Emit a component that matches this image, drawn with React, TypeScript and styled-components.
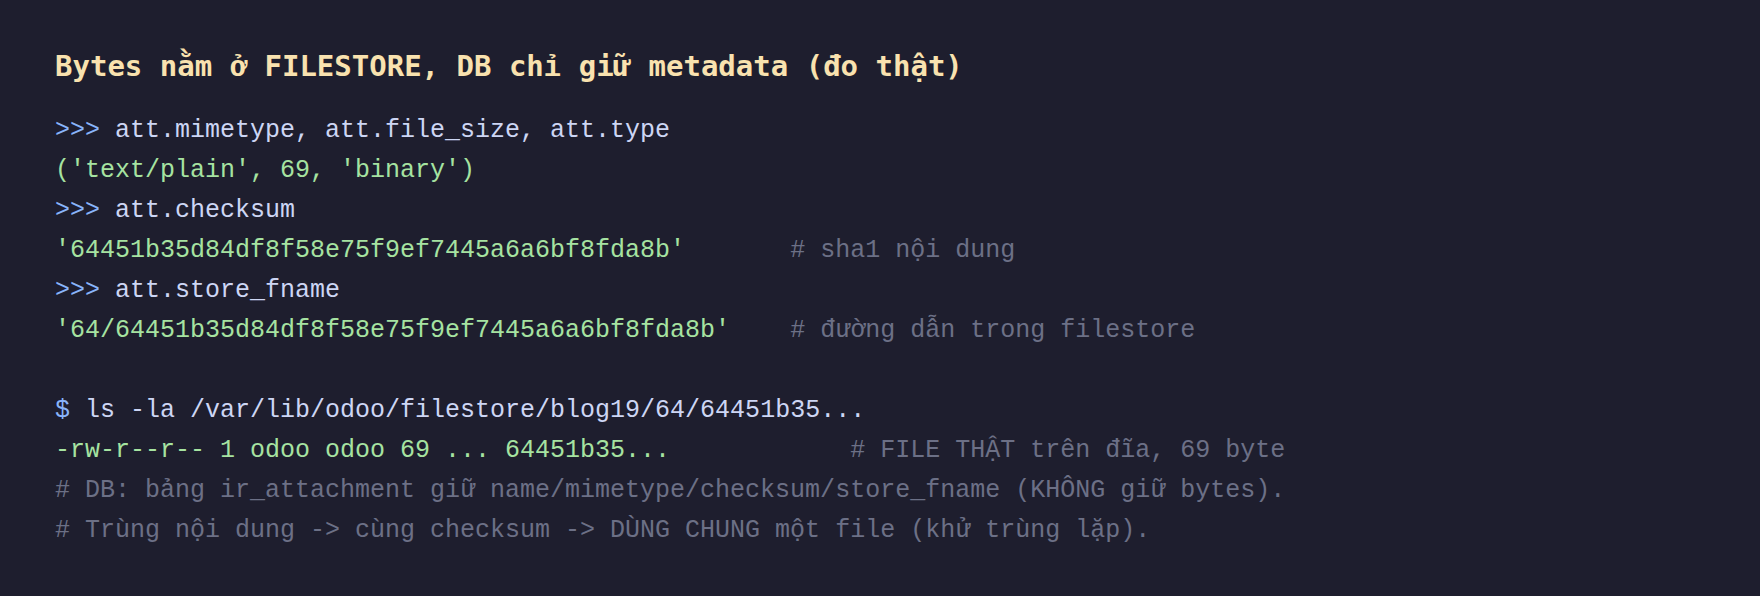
import React from "react";
import styled, { createGlobalStyle } from "styled-components";

const Global = createGlobalStyle`
  html, body {
    margin: 0;
    padding: 0;
    background: #1e1e2e;
  }
  #root {
    min-height: 596px;
  }
`;

const Page = styled.main`
  box-sizing: border-box;
  min-height: 596px;
  background: #1e1e2e;
  padding: 46px 55px 45px 55px;
  display: flex;
  flex-direction: column;
`;

const Title = styled.h3`
  margin: 0 0 25px 0;
  height: 40px;
  font-family: "DejaVu Sans Mono", "Liberation Mono", monospace;
  font-weight: 700;
  font-size: 29px;
  line-height: 40px;
  color: #f9e2af;
  white-space: pre;
`;

/* DejaVu Sans Mono lacks the hook-above letters; draw those with a mono of the same advance */
const HookChar = styled.span`
  font-family: "Liberation Mono", monospace;
  font-weight: 700;
  line-height: 0;
`;

const Code = styled.pre`
  margin: 0;
  font-family: "Liberation Mono", "DejaVu Sans Mono", monospace;
  font-size: 25px;
  line-height: 40px;
  color: #cdd6f4;
  white-space: pre;
  display: flex;
  flex-direction: column;
`;

const Line = styled.div`
  height: 40px;
`;

type Kind = "prompt" | "text" | "str" | "comment";

const colors: Record<Kind, string> = {
  prompt: "#89b4fa",
  text: "#cdd6f4",
  str: "#a6e3a1",
  comment: "#6c7086",
};

const Tok = styled.span<{ $kind: Kind }>`
  color: ${(p) => colors[p.$kind]};
`;

type Seg = [Kind, string];

const lines: Seg[][] = [
  [["prompt", ">>> "], ["text", "att.mimetype, att.file_size, att.type"]],
  [["str", "('text/plain', 69, 'binary')"]],
  [["prompt", ">>> "], ["text", "att.checksum"]],
  [
    ["str", "'64451b35d84df8f58e75f9ef7445a6a6bf8fda8b'"],
    ["text", "       "],
    ["comment", "# sha1 n\u1ED9i dung"],
  ],
  [["prompt", ">>> "], ["text", "att.store_fname"]],
  [
    ["str", "'64/64451b35d84df8f58e75f9ef7445a6a6bf8fda8b'"],
    ["text", "    "],
    ["comment", "# \u0111\u01B0\u1EDDng d\u1EABn trong filestore"],
  ],
  [],
  [["prompt", "$ "], ["text", "ls -la /var/lib/odoo/filestore/blog19/64/64451b35..."]],
  [
    ["str", "-rw-r--r-- 1 odoo odoo 69 ... 64451b35..."],
    ["text", "            "],
    ["comment", "# FILE TH\u1EACT tr\u00EAn \u0111\u0129a, 69 byte"],
  ],
  [
    [
      "comment",
      "# DB: b\u1EA3ng ir_attachment gi\u1EEF name/mimetype/checksum/store_fname (KH\u00D4NG gi\u1EEF bytes).",
    ],
  ],
  [
    [
      "comment",
      "# Tr\u00F9ng n\u1ED9i dung -> c\u00F9ng checksum -> D\u00D9NG CHUNG m\u1ED9t file (kh\u1EED tr\u00F9ng l\u1EB7p).",
    ],
  ],
];

export default function App() {
  return (
    <>
      <Global />
      <Page>
        <Title>
          {"Bytes n\u1EB1m "}
          <HookChar>{"\u1EDF"}</HookChar>
          {" FILESTORE, DB ch"}
          <HookChar>{"\u1EC9"}</HookChar>
          {" gi\u1EEF metadata (\u0111o th\u1EADt)"}
        </Title>
        <Code>
          {lines.map((segs, i) => (
            <Line key={i}>
              {segs.map(([k, t], j) => (
                <Tok key={j} $kind={k}>
                  {t}
                </Tok>
              ))}
            </Line>
          ))}
        </Code>
      </Page>
    </>
  );
}
